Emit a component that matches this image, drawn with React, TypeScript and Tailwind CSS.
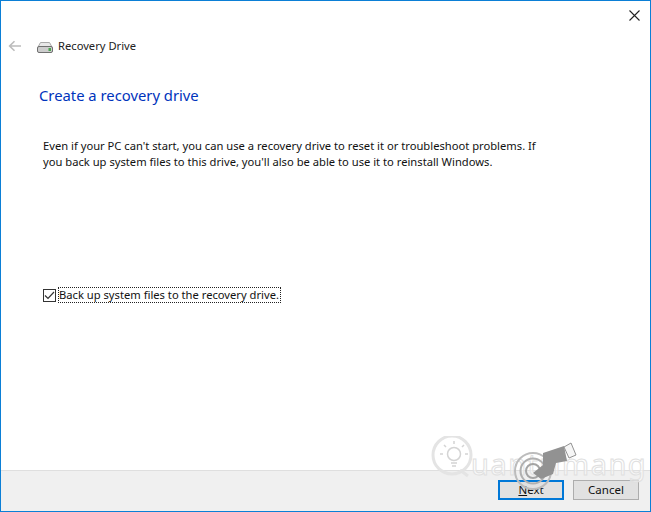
import * as React from 'react';

const font = "font-['Noto_Sans','Open_Sans',sans-serif]";

function DriveIcon() {
  return (
    <svg width="16" height="11" viewBox="0 0 16 11">
      <path d="M3.5 0.5h9L15 5H1z" fill="#e8e8e8" stroke="#a8a8a8" />
      <rect x="0.5" y="4.5" width="15" height="6" rx="1.5" fill="#cdcdcd" stroke="#707070" />
      <rect x="11.5" y="6" width="2.5" height="3" fill="#4aa54e" />
    </svg>
  );
}

function Watermark() {
  return (
    <div className="pointer-events-none absolute left-[429px] top-[435px] h-[76px] w-[220px]">
      <div className={`absolute left-[41px] top-[8px] text-[29px] leading-[40px] tracking-[1.5px] whitespace-nowrap text-white/50 [-webkit-text-stroke:1px_#e0e0e0] ${font}`}>
        uantrimang
      </div>
      <svg className="absolute left-0 top-0" width="220" height="76" viewBox="0 0 220 76" fill="none">
        <circle cx="22" cy="19" r="19" stroke="#e4e4e4" strokeWidth="3" />
        <path d="M30 34l8 6" stroke="#e4e4e4" strokeWidth="3" />
        <circle cx="24" cy="18" r="6.5" stroke="#d4d4d4" strokeWidth="1.5" />
        <path d="M21 27h6M22 30h4M13 18h-3M38 18h-3M24 8V5M16 11l-2-2M32 11l2-2" stroke="#d4d4d4" strokeWidth="1.5" />
        <circle cx="103" cy="35" r="18" stroke="#bcbcbc" strokeWidth="2" />
        <circle cx="103" cy="35" r="12.5" stroke="#b0b0b0" strokeWidth="2" />
        <circle cx="103" cy="35" r="7" stroke="#a4a4a4" strokeWidth="2" />
        <path d="M113 17L134 10L137 25L126 27L123 38L111 43L103 37L113 29Z" fill="#929292" />
        <path d="M134 11l7-4 5 12-7 3z" fill="#f6f6f6" stroke="#929292" />
      </svg>
    </div>
  );
}

export default function App() {
  return (
    <div className={`relative flex h-[512px] w-[651px] flex-col overflow-hidden border border-[#0b7fd6] bg-white text-[#111] ${font}`}>
      <div className="flex h-[28px] justify-end">
        <svg className="mr-[10px] mt-[9px]" width="11" height="11" viewBox="0 0 11 11" stroke="#222" strokeWidth="1.1">
          <path d="M0.5 0.5l10 10M10.5 0.5l-10 10" />
        </svg>
      </div>
      <div className="flex h-[34px] items-center">
        <svg className="ml-[7px]" width="14" height="12" viewBox="0 0 14 12" fill="none" stroke="#bcbcbc" strokeWidth="1.6">
          <path d="M13 6H2M6.5 1.2L1.6 6l4.9 4.8" />
        </svg>
        <div className="ml-[15px] mt-[3px] flex h-[12px] items-center"><DriveIcon /></div>
        <span className="ml-[5px] text-[11.2px] leading-4 text-[#222]">Recovery Drive</span>
      </div>
      <div className="ml-[38px] mt-[22px] text-[14.8px] leading-5 text-[#0033bc]">Create a recovery drive</div>
      <p className="ml-[42px] mt-[33px] w-[540px] text-[11.2px] leading-4">
        Even if your PC can't start, you can use a recovery drive to reset it or troubleshoot problems. If
        <br />
        you back up system files to this drive, you'll also be able to use it to reinstall Windows.
      </p>
      <div className="ml-[42px] mt-[117px] flex items-center">
        <span className="flex h-[13px] w-[13px] items-center justify-center border border-[#333] bg-white">
          <svg width="11" height="9" viewBox="0 0 11 9" fill="none" stroke="#333" strokeWidth="1.2">
            <path d="M1 4.5l3 3 6-6.5" />
          </svg>
        </span>
        <span className="ml-[2px] border border-dotted border-[#222] pr-px text-[11.2px] leading-[14px]">
          Back up system files to the recovery drive.
        </span>
      </div>
      <div className="mt-auto flex h-[41px] items-start justify-end gap-[9px] border-t border-[#dfdfdf] bg-[#f0f0f0] pr-[11px] pt-[9px]">
        <button className="h-[20px] w-[66px] border-2 border-[#0078d7] bg-[#e1e1e1] text-[11.5px] leading-none">
          <span className="underline">N</span>ext
        </button>
        <button className="h-[20px] w-[66px] border border-[#adadad] bg-[#e1e1e1] text-[11.5px] leading-none">
          Cancel
        </button>
      </div>
      <Watermark />
    </div>
  );
}
